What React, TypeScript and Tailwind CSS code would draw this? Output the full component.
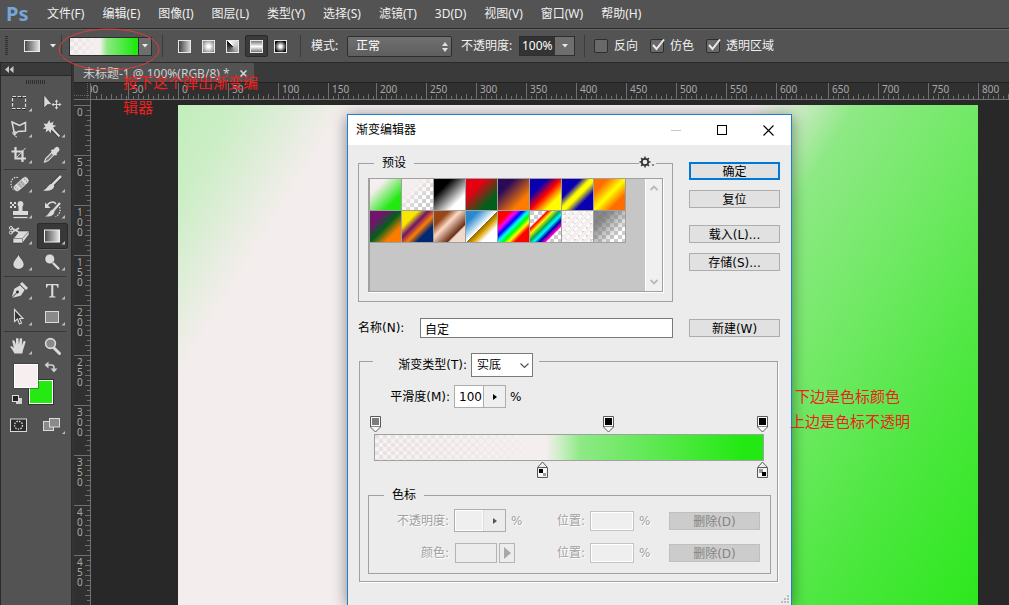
import React from "react";

const MENUS = [
  "文件(F)", "编辑(E)", "图像(I)", "图层(L)", "类型(Y)", "选择(S)",
  "滤镜(T)", "3D(D)", "视图(V)", "窗口(W)", "帮助(H)",
];

const CHECKER =
  "bg-[conic-gradient(#ffffff_25%,#cccccc_0_50%,#ffffff_0_75%,#cccccc_0)] bg-[length:8px_8px]";

const PRESETS: { name: string; fill: string }[] = [
  { name: "前景到背景", fill: "bg-[linear-gradient(135deg,#f5eeee_25%,#22e912_75%)]" },
  { name: "前景到透明", fill: "bg-[linear-gradient(135deg,#f5eeee_30%,#f5eeee00_75%)]" },
  { name: "黑白", fill: "bg-[linear-gradient(135deg,#000_28%,#fff_75%)]" },
  { name: "红绿", fill: "bg-[linear-gradient(135deg,#e60012_30%,#00601b_75%)]" },
  { name: "紫橙", fill: "bg-[linear-gradient(135deg,#290a59_25%,#ff7c00_75%)]" },
  { name: "蓝红黄", fill: "bg-[linear-gradient(135deg,#0a00b2_28%,#ff0000_50%,#fffc00_75%)]" },
  { name: "蓝黄蓝", fill: "bg-[linear-gradient(135deg,#0a00b2_30%,#fffc00_46%,#fffc00_54%,#0a00b2_72%)]" },
  { name: "橙黄橙", fill: "bg-[linear-gradient(135deg,#ff6e02_22%,#ffff00_50%,#ff6d00_75%)]" },
  { name: "紫绿橙", fill: "bg-[linear-gradient(135deg,#6f156c_25%,#00601b_50%,#fd7c00_75%)]" },
  { name: "黄紫橙蓝", fill: "bg-[linear-gradient(135deg,#f9e600_26%,#6f156c_42%,#fd7c00_58%,#002874_74%)]" },
  { name: "铜色", fill: "bg-[linear-gradient(135deg,#97461a_24%,#fbd8c5_42%,#6c2e16_71%,#efdbcd_75%)]" },
  { name: "铬黄", fill: "bg-[linear-gradient(135deg,#2989cc_20%,#ffffff_50%,#906a00_51%,#d99f00_60%,#ffffff_75%)]" },
  { name: "色谱", fill: "bg-[linear-gradient(135deg,#ff0000_20%,#ff00ff_30%,#0000ff_40%,#00ffff_49%,#00ff00_58%,#ffff00_67%,#ff0000_77%)]" },
  { name: "透明彩虹", fill: "bg-[linear-gradient(135deg,#ff000000_25%,#ff0000_29%,#fff200_37%,#00a651_48%,#00ffff_56%,#0000a8_65%,#ff00c8_74%,#ff00c800_77%)]" },
  { name: "透明条纹", fill: "bg-[repeating-linear-gradient(135deg,#f5eeee_0px,#f5eeee_3px,#f5eeee33_4px,#f5eeee33_6px)]" },
  { name: "中灰密度", fill: "bg-[linear-gradient(135deg,#7a7a7ae6_25%,#80808000_78%)]" },
];

const H_RULER: { label: string; width: string }[] = [
  { label: "50", width: "w-[50px]" },
  { label: "0", width: "w-[50px]" },
  { label: "50", width: "w-[50px]" },
  { label: "100", width: "w-[50px]" },
  { label: "150", width: "w-[48px]" },
  { label: "200", width: "w-[50px]" },
  { label: "250", width: "w-[50px]" },
  { label: "300", width: "w-[50px]" },
  { label: "350", width: "w-[50px]" },
  { label: "400", width: "w-[50px]" },
  { label: "450", width: "w-[50px]" },
  { label: "500", width: "w-[50px]" },
  { label: "550", width: "w-[50px]" },
  { label: "600", width: "w-[52px]" },
  { label: "650", width: "w-[50px]" },
  { label: "700", width: "w-[50px]" },
  { label: "750", width: "w-[50px]" },
  { label: "800", width: "w-[50px]" },
];

const V_RULER = ["0", "50", "100", "150", "200", "250", "300", "350", "400", "450"];

const G = "#dadada";
const D = "#2b2b2b";

function HTicks({ major = true }: { major?: boolean }) {
  return (
    <svg width="52" height="16" className="block" aria-hidden="true" shapeRendering="crispEdges">
      {major && <rect x="0" y="0" width="1" height="16" fill="#707070" />}
      {[1, 2, 3, 4, 5, 6, 7, 8, 9].map((i) => (
        <rect key={i} x={i * 5} y={i % 2 ? 13 : 11} width="1" height={i % 2 ? 3 : 5} fill="#707070" />
      ))}
    </svg>
  );
}

function VTicks() {
  return (
    <svg width="16" height="50" className="block" aria-hidden="true" shapeRendering="crispEdges">
      <rect x="0" y="0" width="16" height="1" fill="#707070" />
      {[1, 2, 3, 4, 5, 6, 7, 8, 9].map((i) => (
        <rect key={i} x={i % 2 ? 13 : 11} y={i * 5} width={i % 2 ? 3 : 5} height="1" fill="#707070" />
      ))}
    </svg>
  );
}

function Tool({
  label, children, active = false, more = true,
}: { label: string; children: React.ReactNode; active?: boolean; more?: boolean }) {
  return (
    <button
      type="button"
      aria-label={label}
      className={
        active
          ? "h-[26px] w-[31px] rounded-[3px] bg-[#383838] shadow-[inset_0_0_0_1px_#2a2a2a,0_1px_0_#666]"
          : "h-[26px] w-[31px]"
      }
    >
      <svg width="31" height="26" viewBox="0 0 31 26" className="block" fill="none">
        {children}
        {more && <path d="M28 18v3.500h-3.500z" fill="#bdbdbd" />}
      </svg>
    </button>
  );
}

function ToolRow({ children }: { children: React.ReactNode }) {
  return <div className="flex gap-0.5">{children}</div>;
}

function ToolRule() {
  return <div className="mt-px mb-px h-px w-[62px] bg-[#383838]" />;
}

function Toolbar() {
  return (
    <aside className="flex w-[72px] shrink-0 flex-col border-x border-[#2a2a2a] bg-[#535353]">
      <div className="flex h-3 items-center bg-[#3a3a3a] pl-1">
        <svg width="9" height="7" aria-hidden="true">
          <path d="M4 0v7L0 3.500zM8.500 0v7l-4-3.500z" fill="#c8c8c8" />
        </svg>
      </div>
      <div className="flex h-[15px] justify-center border-t border-[#2a2a2a] pt-1">
        <div className="h-1 w-5 bg-[repeating-linear-gradient(90deg,#2e2e2e_0px,#2e2e2e_1px,#535353_1px,#535353_2px)]" />
      </div>
      <div className="flex flex-col pl-[3px]">
        <ToolRow>
          <Tool label="矩形选框工具">
            <rect x="8.500" y="7.500" width="13" height="12" stroke={D} strokeDasharray="4 2" />
            <rect x="8.500" y="6.500" width="13" height="12" stroke={G} strokeDasharray="3.500 1.500" strokeWidth="1.200" />
          </Tool>
          <Tool label="移动工具" more={false}>
            <path d="M7 5v13l3.500-3.500H15z" fill={G} stroke={D} strokeWidth=".5" />
            <path d="M19.500 11v7M16 14.500h7" stroke={G} strokeWidth="1.200" />
            <path d="M19.500 9.500l1.800 2.200h-3.600zM19.500 19.500l1.800-2.200h-3.600zM14.500 14.500l2.200-1.800v3.600zM24.500 14.500l-2.200-1.800v3.600z" fill={G} />
          </Tool>
        </ToolRow>
        <ToolRow>
          <Tool label="多边形套索工具">
            <path d="M8 6l7.500 3.500 6-3V15L14 15.500 10.500 18z" stroke={G} strokeWidth="1.500" />
            <circle cx="10.500" cy="17" r="1.700" stroke={G} />
            <path d="M10.500 18.500c0 1.500 1 2 2.500 2.500" stroke={G} />
          </Tool>
          <Tool label="魔棒工具">
            <path d="M15 12.500l7.500 8" stroke={D} strokeWidth="3.500" />
            <path d="M15 12.500l7.500 8" stroke={G} strokeWidth="2.200" />
            <path d="M12.300 4l1.200 3.200 3-1.700-.8 3.400 3.500.9-3 1.700 1.500 3.200-3.300-1-.9 3.600-1.900-3-2.900 2 .6-3.400-3.600-.4 2.800-2.100-2-2.800 3.400.3z" fill={G} />
          </Tool>
        </ToolRow>
        <ToolRow>
          <Tool label="裁剪工具">
            <path d="M11.500 5v11.500H22M7.500 9.500H18.500V20" stroke={G} strokeWidth="2.200" />
            <path d="M12.500 15.500L21.500 6" stroke={G} />
          </Tool>
          <Tool label="吸管工具">
            <path d="M7.500 20l1.200-3.500 7-7 2.300 2.300-7 7z" fill="#777" stroke={G} strokeWidth="1.100" />
            <path d="M14.500 8l5 5" stroke={G} strokeWidth="2" />
            <path d="M17 10.500l3-3" stroke={G} strokeWidth="5" strokeLinecap="round" />
          </Tool>
        </ToolRow>
        <ToolRule />
        <ToolRow>
          <Tool label="污点修复画笔工具">
            <path d="M14 6.500c-4-1-7 2-7 6 0 3 1 5 3.500 6.500" stroke={G} strokeDasharray="1.500 1.200" strokeWidth="1.200" />
            <g transform="rotate(-42 17 13)">
              <rect x="8" y="9.500" width="18" height="7.400" rx="3.200" fill={G} stroke={D} strokeWidth=".5" />
              <rect x="14" y="9.800" width="6" height="6.800" fill="#bcbcbc" />
              <path d="M10.500 12h1M10.500 14.500h1M22.500 12h1M22.500 14.500h1M15 12h1M18 12h1M15 14.500h1M18 14.500h1" stroke="#777" />
            </g>
          </Tool>
          <Tool label="画笔工具">
            <path d="M24 5l-9 9" stroke={D} strokeWidth="4" />
            <path d="M24 5L15.500 13.500" stroke={G} strokeWidth="2.600" />
            <path d="M15.500 12.500l1.700 1.900c0 4-5 6.100-11 5.100 4.500-1.700 4.500-6 9.300-7z" fill={G} />
          </Tool>
        </ToolRow>
        <ToolRow>
          <Tool label="仿制图章工具">
            <path d="M6 5h2v2H6zM10 5h2v2h-2zM8 7h2v2H8zM6 9h2v2H6zM10 9h2v2h-2z" fill={G} />
            <path d="M16.500 4a3.200 3.200 0 0 1 2 5.500V14H24v4H9v-4h5.500V9.500a3.200 3.200 0 0 1 2-5.500z" fill={G} />
            <path d="M9.500 20.500h14" stroke={G} strokeWidth="1.300" />
          </Tool>
          <Tool label="历史记录画笔工具">
            <path d="M23 6l-7 8" stroke={G} strokeWidth="2.300" />
            <path d="M16 12.500l1.500 2c-.5 4-4 5.500-9.500 5 4-1.500 4-6 8-7z" fill={G} />
            <path d="M10 9c2-4.500 7-5 9-2" stroke={G} strokeWidth="1.500" />
            <path d="M8 5.500V11h5.500z" fill={G} />
            <path d="M22.500 10c1.500 4 0 8-4 9.500" stroke={G} strokeDasharray="1.500 1.200" strokeWidth="1.300" />
          </Tool>
        </ToolRow>
        <ToolRow>
          <Tool label="背景橡皮擦工具">
            <path d="M15.500 8H25v3.500l-6.500 8.500H9v-4z" fill={G} stroke={D} strokeWidth=".5" />
            <path d="M9 15.500h9.500L25 8M18.500 15.500V20" stroke="#888" />
            <path d="M7.500 9.500l7.500-4.500M7.500 5l8 4.500" stroke={G} strokeWidth="1.500" />
            <circle cx="7" cy="5" r="1.600" stroke={G} />
            <circle cx="7" cy="9.500" r="1.600" stroke={G} />
          </Tool>
          <Tool label="渐变工具" active>
            <defs>
              <linearGradient id="tool-grad">
                <stop offset="0" stopColor="#4a4a4a" />
                <stop offset="1" stopColor="#e8e8e8" />
              </linearGradient>
            </defs>
            <rect x="7.500" y="7" width="15" height="12" fill="url(#tool-grad)" stroke="#f0f0f0" />
          </Tool>
        </ToolRow>
        <ToolRow>
          <Tool label="模糊工具">
            <path d="M14.500 5c1 4 5.500 6.500 5.500 10.300a5.500 5 0 0 1-11 0C9 11.500 13.500 9 14.500 5z" fill={G} stroke={D} strokeWidth=".5" />
          </Tool>
          <Tool label="减淡工具">
            <path d="M15.500 13.500l6 6" stroke={G} strokeWidth="2.300" strokeLinecap="round" />
            <circle cx="12.800" cy="10" r="4.900" fill={G} stroke={D} strokeWidth=".5" />
          </Tool>
        </ToolRow>
        <ToolRule />
        <ToolRow>
          <Tool label="钢笔工具">
            <path d="M7 20.500l3-10 6-3.500 5 5-4 6z" fill={G} stroke={D} strokeWidth=".5" />
            <path d="M7.500 20l5.500-5.500" stroke={D} />
            <circle cx="13.500" cy="14" r="1.400" fill={D} />
            <path d="M17 5l6 6" stroke={G} strokeWidth="3" />
          </Tool>
          <Tool label="文字工具">
            <path d="M9 6h12.500v3.800h-1C20.200 7.800 19.500 7.300 18 7.300h-1.700v9.900c0 1 .5 1.300 2.200 1.400v.9h-6.500v-.9c1.700-.1 2.200-.4 2.200-1.400V7.300h-1.700c-1.500 0-2.200.5-2.500 2.500H9z" fill={G} />
          </Tool>
        </ToolRow>
        <ToolRow>
          <Tool label="路径选择工具">
            <path d="M10.500 5.500v12l3-2.500 2 5 2-1-2-4.500h3.500z" fill="#333" stroke={G} strokeWidth="1.100" />
          </Tool>
          <Tool label="矩形工具">
            <rect x="8.500" y="7.500" width="13" height="11" fill="#8a8a8a" stroke={G} />
          </Tool>
        </ToolRow>
        <ToolRule />
        <ToolRow>
          <Tool label="抓手工具">
            <path
              d="M10.500 20.500c-1.200-2.500-2.700-4.500-4.300-6.800 1-.9 2.200-.3 3.600 1.300L8.200 7.500c1.500-.9 2.300 0 2.800 1.500l1 2.800V5.500c1.200-1 2.300-.7 2.500.3l.4 5.700 1-6c1.200-.7 2.300-.3 2.300.8l-.4 6.100 1.800-4.300c1.400-.6 2.200.2 1.800 1.400l-2 6.500c-.5 1.500-.8 2.500-1 4.500z"
              fill={G}
            />
          </Tool>
          <Tool label="缩放工具" more={false}>
            <path d="M16.500 14.500l6 6" stroke={G} strokeWidth="3" strokeLinecap="round" />
            <circle cx="13.500" cy="10.500" r="4.900" fill="#8a8a8a" stroke={G} strokeWidth="1.600" />
          </Tool>
        </ToolRow>
      </div>
      <div className="pt-1 pl-2.5">
        <svg width="50" height="44" viewBox="0 0 50 44" className="block overflow-visible" role="img" aria-label="前景色和背景色">
          <rect x="18.500" y="17.500" width="23" height="23" fill="#24e912" stroke="#fff" />
          <rect x="17.500" y="16.500" width="25" height="25" fill="none" stroke="#333" />
          <rect x="2.500" y="0.500" width="25" height="25" fill="#333" />
          <rect x="3.500" y="1.500" width="23" height="23" fill="#f7eeef" stroke="#fff" />
          <path d="M37 2h3.500a2.500 2.500 0 0 1 2.500 2.500v2" fill="none" stroke="#d0d0d0" strokeWidth="1.500" />
          <path d="M37.500 -1.500v7l-4-3.500zM39.500 5.500h7L43 9.500z" fill="#d0d0d0" />
          <rect x="5" y="35" width="6" height="6" fill="#d0d0d0" />
          <rect x="1.500" y="32.500" width="6" height="6" fill="#222" stroke="#ddd" />
        </svg>
      </div>
      <div className="flex items-center pt-2.5 pl-[9px]">
        <button type="button" aria-label="快速蒙版">
          <svg width="17" height="15" className="block">
            <rect x=".5" y="1" width="16" height="12.500" fill="#2c2c2c" stroke={G} />
            <circle cx="8.500" cy="7.200" r="4" fill="none" stroke={G} strokeDasharray="1.500 1.200" strokeWidth="1.300" />
          </svg>
        </button>
        <button type="button" aria-label="屏幕模式" className="ml-4">
          <svg width="23" height="17" className="block">
            <rect x=".5" y="4.500" width="10" height="9" fill="#8a8a8a" stroke={G} />
            <rect x="6.500" y="1.500" width="10" height="8.500" fill="#8a8a8a" stroke={G} />
            <path d="M22 14v3h-3z" fill="#bdbdbd" />
          </svg>
        </button>
      </div>
    </aside>
  );
}

function OptionRule({ className }: { className: string }) {
  return <div className={"h-[22px] w-px bg-[#3c3c3c] " + className} />;
}

function OptionCheck({ id, label, checked }: { id: string; label: string; checked: boolean }) {
  return (
    <div className="mr-3 flex items-center gap-1.5">
      <span className="relative block h-3.5 w-3.5">
        <input
          id={id}
          type="checkbox"
          defaultChecked={checked}
          className="peer block h-3.5 w-3.5 appearance-none rounded-[2px] border border-[#2e2e2e] bg-[#696969]"
        />
        <svg width="16" height="14" className="pointer-events-none absolute -top-px left-px hidden peer-checked:block">
          <path d="M2 7l3.500 4L13 1.500" fill="none" stroke="#ececec" strokeWidth="2" />
        </svg>
      </span>
      <label htmlFor={id}>{label}</label>
    </div>
  );
}

function OptionsBar() {
  return (
    <div className="flex h-[34px] shrink-0 items-center border-t border-b border-t-[#666] border-b-[#2a2a2a] bg-[#535353] text-[12px] text-[#f0f0f0]">
      <div className="ml-[5px] h-5 w-[3px] bg-[repeating-linear-gradient(180deg,#2e2e2e_0px,#2e2e2e_1px,#535353_1px,#535353_2px)]" />
      <div className="ml-4 h-3 w-4 border border-[#e8e8e8] bg-[linear-gradient(90deg,#4a4a4a,#e0e0e0)]" />
      <button type="button" aria-label="工具预设" className="ml-[10px]">
        <svg width="6" height="4" className="block"><path d="M0 0h6L3 3.500z" fill="#e8e8e8" /></svg>
      </button>
      <OptionRule className="ml-[5px]" />
      <div className="relative ml-[7px]">
        <div className="flex h-[19px] border border-[#2e2e2e]">
          <div className="w-[68px] bg-[conic-gradient(#f8f4f4_25%,#e6dfdf_0_50%,#f8f4f4_0_75%,#e6dfdf_0)] bg-[length:8px_8px]">
            <div className="h-full bg-[linear-gradient(90deg,#f5eeee33,#f5eeee_44%,#8ee985_54%,#22e912_95%)]" />
          </div>
          <button type="button" aria-label="选择渐变" className="flex w-[13px] items-center justify-center border-l border-[#2e2e2e] bg-[#6e6e6e]">
            <svg width="6" height="4" className="block"><path d="M0 0h6L3 3.500z" fill="#e8e8e8" /></svg>
          </button>
        </div>
        <svg width="104" height="44" className="pointer-events-none absolute -top-2.5 -left-3 z-30" aria-hidden="true">
          <ellipse cx="52" cy="22.500" rx="50" ry="20.500" fill="none" stroke="#e23a3a" />
        </svg>
      </div>
      <OptionRule className="ml-[10px]" />
      <div className="ml-2.5 flex items-center gap-px">
        <button type="button" aria-label="线性渐变" className="flex h-[22px] w-[23px] items-center justify-center">
          <span className="h-[13px] w-[13px] border border-[#e8e8e8] bg-[linear-gradient(90deg,#444,#d0d0d0)]" />
        </button>
        <button type="button" aria-label="径向渐变" className="flex h-[22px] w-[23px] items-center justify-center">
          <span className="h-[13px] w-[13px] border border-[#e8e8e8] bg-[radial-gradient(#fff_15%,#777)]" />
        </button>
        <button type="button" aria-label="角度渐变" className="flex h-[22px] w-[23px] items-center justify-center">
          <span className="h-[13px] w-[13px] border border-[#e8e8e8] bg-[conic-gradient(from_315deg,#fff,#aaa_50%,#111)]" />
        </button>
        <button type="button" aria-label="对称渐变" className="flex h-[22px] w-[23px] items-center justify-center rounded-[3px] bg-[#3a3a3a] shadow-[inset_0_0_0_1px_#2a2a2a]">
          <span className="h-[13px] w-[13px] border border-[#e8e8e8] bg-[linear-gradient(180deg,#777,#fff_50%,#777)]" />
        </button>
        <button type="button" aria-label="菱形渐变" className="flex h-[22px] w-[23px] items-center justify-center">
          <span className="h-[13px] w-[13px] border border-[#e8e8e8] bg-[radial-gradient(#fff_15%,#111_75%)]" />
        </button>
      </div>
      <OptionRule className="ml-2" />
      <label htmlFor="blend-mode" className="ml-2.5 w-9">模式:</label>
      <div className="relative w-[105px]">
        <select
          id="blend-mode"
          className="h-[21px] w-full appearance-none rounded-[2px] border border-[#2e2e2e] bg-[linear-gradient(180deg,#707070,#5e5e5e)] pl-2 text-[12px] leading-none text-white"
        >
          <option>正常</option>
        </select>
        <svg width="6" height="10" className="pointer-events-none absolute top-1.5 right-1" aria-hidden="true">
          <path d="M0 4h6L3 0zM0 6h6L3 10z" fill="#e0e0e0" />
        </svg>
      </div>
      <label htmlFor="opacity" className="ml-[9px] w-[58px] whitespace-nowrap">不透明度:</label>
      <div className="flex h-5 border border-[#2e2e2e]">
        <input id="opacity" defaultValue="100%" className="w-[35px] bg-[#333] pl-0.5 text-[12px] text-white" />
        <button type="button" aria-label="不透明度滑块" className="flex w-[19px] items-center justify-center bg-[#6e6e6e]">
          <svg width="6" height="4" className="block"><path d="M0 0h6L3 3.500z" fill="#e8e8e8" /></svg>
        </button>
      </div>
      <OptionRule className="mr-[9px] ml-[9px]" />
      <OptionCheck id="reverse" label="反向" checked={false} />
      <OptionCheck id="dither" label="仿色" checked />
      <OptionCheck id="transparency" label="透明区域" checked />
    </div>
  );
}

function Stop({ left, up = false, fill, label }: { left: string; up?: boolean; fill: React.ReactNode; label: string }) {
  return (
    <button type="button" aria-label={label} className={"absolute top-0 -ml-[5px] " + left}>
      <svg width="11" height="17" viewBox="0 0 11 17" className="block">
        {up ? (
          <>
            <path d="M.5 6.500L5.500 1l5 5.500v10H.5z" fill="#eee" stroke="#5a5a5a" />
            <path d="M1 6.500h9" stroke="#5a5a5a" />
          </>
        ) : (
          <>
            <path d="M.5 .5h10V11L5.500 16 .5 11z" fill="#fafafa" stroke="#5a5a5a" />
            <path d="M1 10.500h9" stroke="#8a8a8a" strokeWidth="1" />
          </>
        )}
        {fill}
      </svg>
    </button>
  );
}

const DIALOG_BUTTON =
  "flex h-[18px] w-full items-center justify-center border border-[#adadad] bg-[#e1e1e1] pt-0.5 text-[12px] leading-none";
const DELETE_BUTTON =
  "flex h-[18px] w-full items-center justify-center border border-[#bfbfbf] bg-[#cccccc] pt-0.5 text-[12px] leading-none text-[#838383]";
const DISABLED_FIELD = "w-full border border-[#c4c4c4] bg-[#efefef] shadow-[inset_0_0_0_1px_#fff]";
const DISABLED_TEXT = "text-[#a0a0a0] [text-shadow:1px_1px_0_#fff]";

function GradientEditor() {
  return (
    <section
      role="dialog"
      aria-labelledby="editor-title"
      className="absolute top-[114px] bottom-0 left-[347px] z-20 flex w-[445px] flex-col overflow-hidden border-x border-t border-[#1e7fd0] bg-[#ececec] font-['DejaVu_Sans','Noto_Sans_CJK_SC',sans-serif] text-[12px] leading-[18px] text-black shadow-[0_2px_14px_rgba(0,0,0,0.45)]"
    >
      <header className="flex h-[30px] shrink-0 items-center bg-white pl-2">
        <h1 id="editor-title" className="flex-1">渐变编辑器</h1>
        <button type="button" aria-label="最小化" className="flex w-[46px] justify-center">
          <svg width="10" height="10"><path d="M0 5.500h10" stroke="#c8c8c8" /></svg>
        </button>
        <button type="button" aria-label="最大化" className="flex w-[46px] justify-center">
          <svg width="10" height="10"><rect x=".5" y=".5" width="9" height="9" fill="none" stroke="#000" /></svg>
        </button>
        <button type="button" aria-label="关闭" className="flex w-[46px] justify-center">
          <svg width="11" height="11"><path d="M.5 .5l10 10M10.500 .5l-10 10" stroke="#000" strokeWidth="1.100" /></svg>
        </button>
      </header>

      <div className="flex flex-col pt-[9px] pr-[11px] pl-2.5">
        <div className="grid grid-cols-[1fr_91px] gap-4">
          <fieldset className="relative min-w-0 border border-[#a0a0a0] px-[9px] pb-[9px]">
            <legend className="ml-1.5 px-2">预设</legend>
            <button type="button" aria-label="预设菜单" className="absolute -top-[18px] right-4 h-4 bg-[#ececec]">
              <svg width="17" height="14" className="block">
                <circle cx="6" cy="7" r="3.200" fill="none" stroke="#333" strokeWidth="1.700" />
                <path d="M6 1.500v2M6 10.500v2M.5 7h2M9.500 7h2M2.100 3.100l1.400 1.400M8.500 9.500l1.400 1.400M9.900 3.100L8.500 4.500M3.500 9.500l-1.400 1.400" stroke="#333" strokeWidth="1.500" />
                <path d="M12.500 9.500h3L14 11z" fill="#333" />
              </svg>
            </button>
            <div className="mt-1.5 flex h-[114px] justify-between border border-l-2 border-[#a0a0a0] bg-[#c6c6c6] shadow-[1px_1px_0_#fff]">
              <div className="grid h-16 grid-cols-[repeat(8,31px)] grid-rows-[repeat(2,31px)] gap-px bg-[#a0a0a0] pr-px pb-px">
                {PRESETS.map((p) => (
                  <button key={p.name} type="button" aria-label={p.name} className={CHECKER}>
                    <span className={"block h-full w-full " + p.fill} />
                  </button>
                ))}
              </div>
              <div className="flex w-[17px] flex-col items-center justify-between border-l border-white bg-[#f0f0f0] py-1.5">
                <svg width="8" height="6"><path d="M.5 5L4 1.500 7.500 5" fill="none" stroke="#b8b8b8" strokeWidth="1.800" /></svg>
                <svg width="8" height="6"><path d="M.5 1L4 4.500 7.500 1" fill="none" stroke="#b8b8b8" strokeWidth="1.800" /></svg>
              </div>
            </div>
          </fieldset>
          <div className="flex flex-col gap-2.5 pt-2">
            <button type="button" className="flex h-[18px] w-full items-center justify-center border-2 border-[#0078d7] bg-[#e1e1e1] pt-0.5 text-[12px] leading-none">确定</button>
            <button type="button" className={DIALOG_BUTTON}>复位</button>
            <button type="button" className={DIALOG_BUTTON + " mt-[7px]"}>载入(L)...</button>
            <button type="button" className={DIALOG_BUTTON}>存储(S)...</button>
          </div>
        </div>

        <div className="mt-4 grid grid-cols-[1fr_91px] items-center gap-4">
          <div className="flex items-center">
            <label htmlFor="gradient-name" className="w-[62px]">名称(N):</label>
            <input id="gradient-name" defaultValue="自定" className="h-5 min-w-0 flex-1 border border-[#7a7a7a] bg-white px-1 text-[12px] leading-none" />
          </div>
          <button type="button" className={DIALOG_BUTTON}>新建(W)</button>
        </div>

        <fieldset className="mt-[7px] mr-0.5 ml-px min-w-0 border border-[#a0a0a0] pb-[7px] shadow-[1px_1px_0_#fff]">
          <legend className="ml-[13px] pt-2 pr-1.5">
            <span className="flex items-center gap-1">
              <label htmlFor="gradient-type" className="w-[94px] text-right">渐变类型(T):</label>
              <span className="relative block">
                <select id="gradient-type" className="block h-6 w-[62px] appearance-none border border-[#7a7a7a] bg-white pl-[5px] text-[12px] leading-none">
                  <option>实底</option>
                </select>
                <svg width="9" height="6" className="pointer-events-none absolute top-[10px] right-1" aria-hidden="true">
                  <path d="M.5 .5l4 4 4-4" fill="none" stroke="#555" strokeWidth="1.200" />
                </svg>
              </span>
            </span>
          </legend>
          <div className="mt-2 flex h-[23px] items-center gap-1">
            <label htmlFor="smoothness" className="w-[90px] text-right">平滑度(M):</label>
            <div className="flex h-[23px] w-[52px] border border-[#adadad]">
              <input id="smoothness" defaultValue="100" className="min-w-0 flex-1 bg-white pl-1 text-[12px]" />
              <button type="button" aria-label="平滑度滑块" className="flex w-[22px] items-center justify-center border-l border-[#adadad] bg-[#efefef]">
                <svg width="4" height="6"><path d="M0 0v6l4-3z" fill="#000" /></svg>
              </button>
            </div>
            <span>%</span>
          </div>
          <div className="mt-2 mr-[13px] ml-3.5">
            <div className="relative h-[18px]">
              <Stop label="不透明度色标 1" left="left-px" fill={<rect x="2" y="2" width="7" height="7" fill="#7d7d7d" />} />
              <Stop label="不透明度色标 2" left="left-[60%]" fill={<rect x="2" y="2" width="7" height="7" fill="#000" />} />
              <Stop label="不透明度色标 3" left="left-[99.5%]" fill={<rect x="2" y="2" width="7" height="7" fill="#000" />} />
            </div>
            <div className="h-[27px] border border-[#a0a0a0] bg-[conic-gradient(#f8f4f4_25%,#e6dfdf_0_50%,#f8f4f4_0_75%,#e6dfdf_0)] bg-[length:8px_8px]">
              <div className="h-full bg-[linear-gradient(90deg,#f5eeee22,#f5eeee_44%,#c9eec2_48%,#8ee985_53%,#22e912_95%)]" />
            </div>
            <div className="relative h-[18px] pt-px">
              <Stop
                label="颜色色标 1"
                up
                left="left-[43%]"
                fill={<><rect x="2" y="8" width="7" height="7" fill="#fff" /><rect x="2" y="8" width="4" height="4" fill="#000" /><rect x="6" y="12" width="3" height="3" fill="#999" /></>}
              />
              <Stop
                label="颜色色标 2"
                up
                left="left-[99.5%]"
                fill={<><rect x="2" y="8" width="7" height="7" fill="#fff" /><rect x="2" y="8" width="4" height="4" fill="#999" /><rect x="5" y="11" width="4" height="4" fill="#000" /></>}
              />
            </div>
          </div>
          <fieldset className="mt-[7px] mr-1.5 ml-2 min-w-0 border border-[#a0a0a0] pr-2.5 pb-2.5">
            <legend className="ml-[15px] px-2">色标</legend>
            <div className="mt-[5px] grid grid-cols-[80px_52px_1fr_44px_25px_91px] items-center gap-x-[5px] gap-y-[11px]">
              <label htmlFor="stop-opacity" className={"text-right " + DISABLED_TEXT}>不透明度:</label>
              <div className="flex h-[23px] border border-[#adadad]">
                <input id="stop-opacity" disabled className="min-w-0 flex-1 border border-white bg-[#efefef]" />
                <button type="button" disabled aria-label="不透明度滑块" className="flex w-[22px] items-center justify-center border-l border-[#dcdcdc]">
                  <svg width="4" height="6"><path d="M0 0v6l4-3z" fill="#555" /></svg>
                </button>
              </div>
              <div className={"flex justify-between " + DISABLED_TEXT}>
                <span>%</span>
                <label htmlFor="opacity-position">位置:</label>
              </div>
              <input id="opacity-position" disabled className={"h-5 " + DISABLED_FIELD} />
              <span className={DISABLED_TEXT}>%</span>
              <button type="button" disabled className={DELETE_BUTTON}>删除(D)</button>

              <span className={"text-right " + DISABLED_TEXT}>颜色:</span>
              <div className="flex h-5 gap-0.5">
                <button type="button" disabled aria-label="颜色" className="ml-px w-[42px] shrink-0 border border-[#b4b4b4]" />
                <button type="button" disabled aria-label="颜色选项" className="flex w-4 shrink-0 items-center justify-center border border-[#b4b4b4]">
                  <svg width="7" height="12"><path d="M0 0v12l7-6z" fill="#a8a8a8" /></svg>
                </button>
              </div>
              <div className={"flex justify-end " + DISABLED_TEXT}>
                <label htmlFor="color-position">位置:</label>
              </div>
              <input id="color-position" disabled className={"h-5 " + DISABLED_FIELD} />
              <span className={DISABLED_TEXT}>%</span>
              <button type="button" disabled className={DELETE_BUTTON}>删除(D)</button>
            </div>
          </fieldset>
        </fieldset>
      </div>
      <svg width="10" height="10" className="mt-auto mr-px mb-px shrink-0 self-end" aria-hidden="true">
        <path d="M7 1h2v2H7zM4 4h2v2H4zM7 4h2v2H7zM1 7h2v2H1zM4 7h2v2H4zM7 7h2v2H7z" fill="#bcbcbc" />
      </svg>
    </section>
  );
}

function Workspace() {
  return (
    <main className="ml-0.5 flex min-w-0 flex-1 flex-col">
      <div className="flex h-[19px] shrink-0 bg-[#3a3a3a]">
        <div className="flex w-[180px] items-center justify-between bg-[#535353] pt-0.5 pr-[7px] pl-[9px] text-[12px] whitespace-nowrap text-[#d0d0d0]">
          <span>未标题-1 @ 100%(RGB/8) *</span>
          <button type="button" aria-label="关闭文档">
            <svg width="7" height="7" className="block"><path d="M.5 .5l6 6M6.500 .5l-6 6" stroke="#d8d8d8" strokeWidth="1.500" /></svg>
          </button>
        </div>
      </div>
      <div className="flex h-[18px] shrink-0 border-t border-b border-t-[#222] border-b-[#707070] bg-[#303030] text-[10px] leading-[13px] text-[#a8a8a8]">
        <div className="w-[17px] shrink-0 border-r border-[#707070]">
          <svg width="16" height="16" className="block" aria-hidden="true">
            <path d="M0 12.500h16M13.500 0v16" stroke="#666" strokeDasharray="1 1" />
          </svg>
        </div>
        <div className="flex min-w-0 flex-1 overflow-hidden">
          <div className="grid w-[37px] shrink-0 overflow-hidden">
            <div className="col-start-1 row-start-1 flex justify-end"><HTicks major={false} /></div>
            <span className="col-start-1 row-start-1 -ml-2.5">100</span>
          </div>
          {H_RULER.map((c, i) => (
            <div key={i} className={"grid shrink-0 overflow-hidden " + c.width}>
              <div className="col-start-1 row-start-1"><HTicks /></div>
              <span className="col-start-1 row-start-1 pl-1">{c.label}</span>
            </div>
          ))}
        </div>
      </div>
      <div className="flex min-h-0 flex-1">
        <div className="w-[17px] shrink-0 overflow-hidden border-r border-[#707070] bg-[#303030] pt-[5px] text-[10px] leading-[10px] text-[#a8a8a8]">
          {V_RULER.map((n) => (
            <div key={n} className="grid h-[50px]">
              <div className="col-start-1 row-start-1"><VTicks /></div>
              <div className="col-start-1 row-start-1 flex flex-col pt-0.5 pl-[3px]">
                {n.split("").map((d, i) => <span key={i}>{d}</span>)}
              </div>
            </div>
          ))}
        </div>
        <div className="flex min-w-0 flex-1 overflow-hidden bg-[#282828] pt-[5px] pl-[87px]">
          <div className="w-[800px] shrink-0 bg-[linear-gradient(122deg,#c2eebb_0px,#cdeec7_55px,#f4eded_145px,#f4eded_490px,#c8eac0_530px,#8ee985_575px,#72e966_680px,#4fe742_800px,#2ce81d_943px)]" />
        </div>
      </div>
    </main>
  );
}

export default function App() {
  return (
    <div className="relative flex h-screen flex-col overflow-hidden bg-[#333] font-['Noto_Sans','Noto_Sans_CJK_SC',sans-serif]">
      <nav className="flex h-[29px] shrink-0 items-center gap-[18px] border-b border-[#2a2a2a] bg-[#535353] pl-1.5 text-[12px] whitespace-nowrap text-[#f0f0f0]">
        <span className="w-[23px] text-[20px] leading-none font-bold text-[#77a5d8]">Ps</span>
        {MENUS.map((m) => (
          <button key={m} type="button">{m}</button>
        ))}
      </nav>
      <OptionsBar />
      <div className="flex min-h-0 flex-1">
        <Toolbar />
        <Workspace />
      </div>
      <p className="pointer-events-none absolute top-[70px] left-[123px] z-30 w-[140px] text-[15px] leading-[25px] text-[#ee2020]">
        按下这个弹出渐变编辑器
      </p>
      <GradientEditor />
      <div className="pointer-events-none absolute top-[384px] left-[790px] z-30 text-[15px] leading-[25px] whitespace-nowrap text-[#ee2020]">
        <p className="pl-[5px]">下边是色标颜色</p>
        <p>上边是色标不透明</p>
      </div>
    </div>
  );
}
